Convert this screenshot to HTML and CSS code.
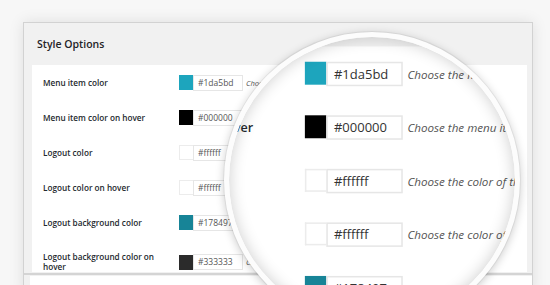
FILE: index.html
```html
<!DOCTYPE html>
<html lang="en">
<head>
  <meta charset="UTF-8" />
  <meta name="viewport" content="width=device-width, initial-scale=1" />
  <title>Style Options</title>
  <link rel="stylesheet" href="styles.css">
</head>
<body>

  <div class="sheet">
    <div class="panel">
      <div class="panel-head">Style Options</div>
      <div class="panel-body">
        <div class="row">
          <div class="label">Menu item color</div>
          <span class="swatch" style="background:#1da5bd"></span>
          <span class="field">#1da5bd</span>
          <span class="desc">Choose the menu item color</span>
        </div>
        <div class="row">
          <div class="label">Menu item color on hover</div>
          <span class="swatch" style="background:#000000"></span>
          <span class="field">#000000</span>
          <span class="desc">Choose the menu item color on hover</span>
        </div>
        <div class="row">
          <div class="label">Logout color</div>
          <span class="swatch light"></span>
          <span class="field">#ffffff</span>
          <span class="desc">Choose the color of the logout link</span>
        </div>
        <div class="row">
          <div class="label">Logout color on hover</div>
          <span class="swatch light"></span>
          <span class="field">#ffffff</span>
          <span class="desc">Choose the color of logout on hover</span>
        </div>
        <div class="row">
          <div class="label">Logout background color</div>
          <span class="swatch" style="background:#178497"></span>
          <span class="field">#178497</span>
          <span class="desc">Choose the color of the logout background</span>
        </div>
        <div class="row tall">
          <div class="label">Logout background color on hover</div>
          <span class="swatch" style="background:#2b2b2b"></span>
          <span class="field">#333333</span>
          <span class="desc">Choose the background color on hover</span>
        </div>
      </div>
      <div class="panel-foot"></div>
    </div>
  </div>

  <!-- magnifier: same form, scaled up inside a round lens -->
  <div class="lens">
    <div class="sheet zoomed">
      <div class="panel">
        <div class="panel-head">Style Options</div>
        <div class="panel-body">
          <div class="row">
            <div class="label">Menu item color</div>
            <span class="swatch" style="background:#1da5bd"></span>
            <span class="field">#1da5bd</span>
            <span class="desc">Choose the menu item color</span>
          </div>
          <div class="row">
            <div class="label">Menu item color on hover</div>
            <span class="swatch" style="background:#000000"></span>
            <span class="field">#000000</span>
            <span class="desc">Choose the menu item color on hover</span>
          </div>
          <div class="row">
            <div class="label">Logout color</div>
            <span class="swatch light"></span>
            <span class="field">#ffffff</span>
            <span class="desc">Choose the color of the logout link</span>
          </div>
          <div class="row">
            <div class="label">Logout color on hover</div>
            <span class="swatch light"></span>
            <span class="field">#ffffff</span>
            <span class="desc">Choose the color of logout on hover</span>
          </div>
          <div class="row">
            <div class="label">Logout background color</div>
            <span class="swatch" style="background:#178497"></span>
            <span class="field">#178497</span>
            <span class="desc">Choose the color of the logout background</span>
          </div>
          <div class="row tall">
            <div class="label">Logout background color on hover</div>
            <span class="swatch" style="background:#2b2b2b"></span>
            <span class="field">#333333</span>
            <span class="desc">Choose the background color on hover</span>
          </div>
        </div>
        <div class="panel-foot"></div>
      </div>
    </div>
  </div>

</body>
</html>
```

FILE: styles.css
```css
html, body {
  margin: 0;
  padding: 0;
  height: 285px;
  overflow: hidden;
}

body {
  font-family: "Open Sans", Arial, sans-serif;
  background: #f7f7f7;
  color: #333;
  position: relative;
}

.sheet {
  width: 550px;
  height: 285px;
  box-sizing: border-box;
  padding: 22px 17px 0 23px;
  background: #f7f7f7;
}

.panel {
  height: 270px;
  border: 1px solid #d2d2d2;
  background: #f1f1f1;
  box-shadow: 0 0 14px rgba(0, 0, 0, 0.1);
  display: flex;
  flex-direction: column;
}

.panel-head {
  height: 42px;
  flex: none;
  padding: 0 0 0 13px;
  display: flex;
  align-items: center;
  font-size: 10.5px;
  font-weight: 600;
  color: #1f2327;
}

.panel-body {
  height: 207px;
  flex: none;
  margin: 0 5px 0 8px;
  background: #fff;
  overflow: hidden;
}

.panel-foot {
  flex: 1;
  border-top: 2px solid #d4d4d4;
  margin-top: 1px;
  position: relative;
}

.panel-foot::after {
  content: "";
  position: absolute;
  left: 6px;
  right: 0;
  top: 1px;
  bottom: 0;
  background: #fff;
}

.row {
  display: flex;
  align-items: center;
  height: 35px;
  padding-left: 11px;
}

.row.tall {
  height: 44px;
}

.label {
  width: 136px;
  flex: none;
  font-size: 8.2px;
  font-weight: 600;
  line-height: 10px;
  color: #23282d;
}

.row.tall .label {
  width: 125px;
  margin-right: 11px;
}

.swatch {
  width: 14px;
  height: 15px;
  flex: none;
}

.swatch.light {
  background: #fff;
  box-sizing: border-box;
  border: 1px solid #ececec;
  border-right: none;
}

.field {
  width: 50px;
  height: 16px;
  flex: none;
  box-sizing: border-box;
  border: 1px solid #e6e6e6;
  padding-left: 4px;
  font-size: 8.5px;
  line-height: 14px;
  color: #555;
}

.desc {
  margin-left: 3px;
  font-size: 7.6px;
  font-style: italic;
  color: #555;
  white-space: nowrap;
}

/* lens */
.lens {
  position: absolute;
  left: 224px;
  top: 32px;
  width: 286px;
  height: 286px;
  border: 5px solid #fcfcfc;
  border-radius: 50%;
  overflow: hidden;
  background: #fff;
  box-shadow: 0 0 0 1px rgba(0, 0, 0, 0.05), 0 2px 10px rgba(0, 0, 0, 0.22);
}

.lens::after {
  content: "";
  position: absolute;
  left: 0;
  top: 0;
  right: 0;
  bottom: 0;
  border-radius: 50%;
  box-shadow: inset 0 0 16px rgba(0, 0, 0, 0.2);
}

.zoomed {
  position: absolute;
  left: -198px;
  top: -90px;
  transform: scale(1.53);
  transform-origin: 0 0;
}

.zoomed .panel {
  box-shadow: none;
}

.zoomed .field {
  color: #333;
}
```
